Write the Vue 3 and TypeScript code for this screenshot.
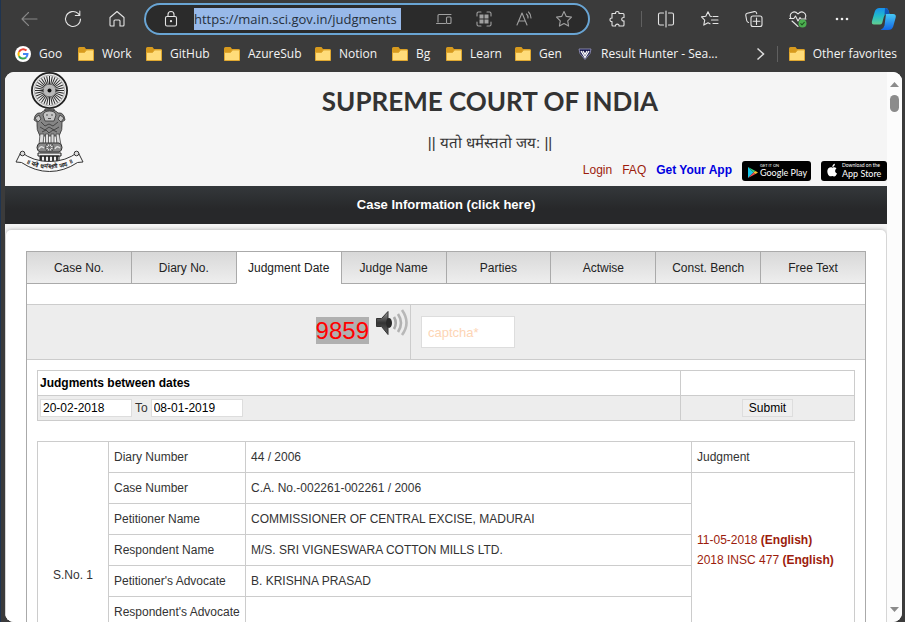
<script setup lang="ts">
import { ref } from 'vue'

const address = ref('https://main.sci.gov.in/judgments')
const captcha = ref('')
const fromDate = ref('20-02-2018')
const toDate = ref('08-01-2019')
const activeTab = ref('Judgment Date')

const tabs = ['Case No.', 'Diary No.', 'Judgment Date', 'Judge Name', 'Parties', 'Actwise', 'Const. Bench', 'Free Text']
const bookmarks = [
  { label: 'Goo', kind: 'google' },
  { label: 'Work', kind: 'folder' },
  { label: 'GitHub', kind: 'folder' },
  { label: 'AzureSub', kind: 'folder' },
  { label: 'Notion', kind: 'folder' },
  { label: 'Bg', kind: 'folder' },
  { label: 'Learn', kind: 'folder' },
  { label: 'Gen', kind: 'folder' },
  { label: 'Result Hunter - Sea...', kind: 'shield' },
]
const details = [
  { name: 'Case Number', value: 'C.A. No.-002261-002261 / 2006' },
  { name: 'Petitioner Name', value: 'COMMISSIONER OF CENTRAL EXCISE, MADURAI' },
  { name: 'Respondent Name', value: 'M/S. SRI VIGNESWARA COTTON MILLS LTD.' },
  { name: "Petitioner's Advocate", value: 'B. KRISHNA PRASAD' },
  { name: "Respondent's Advocate", value: '' },
]
const spokes = Array.from({ length: 32 }, (_, i) => (i * 360) / 32)
const pillars = [26, 30, 34, 38, 42]
</script>

<template>
  <div class="browser">
    <header class="toolbar">
      <button class="tool dim" aria-label="Back">
        <svg width="18" height="18" viewBox="0 0 18 18"><path d="M17 9H2M8.500 2.500 2 9l6.500 6.500" /></svg>
      </button>
      <button class="tool" aria-label="Refresh">
        <svg width="18" height="18" viewBox="0 0 18 18"><path d="M16.500 9A7.500 7.500 0 1 1 14 3.400l1.500 1.600M15.800 1v4.500h-4.500" /></svg>
      </button>
      <button class="tool" aria-label="Home">
        <svg width="18" height="18" viewBox="0 0 18 18"><path d="M2 7.500 9 1.500l7 6V15q0 1-1 1h-3v-5q0-1-1-1H7q-1 0-1 1v5H3q-1 0-1-1z" /></svg>
      </button>
      <div class="address">
        <svg class="lock" width="16" height="18" viewBox="0 0 16 18"><rect x="2.500" y="6.500" width="11" height="9.500" rx="1.500" /><path d="M5 6.500V4.500a3 3 0 0 1 6 0v2" /><circle cx="8" cy="11.200" r=".6" /></svg>
        <input v-model="address" class="url" aria-label="Address" />
        <div class="address-tools">
          <button aria-label="Devices"><svg width="18" height="18" viewBox="0 0 18 18"><path d="M16 4.500H4q-1 0-1 1V12M1.500 13.500h9" /><rect x="11.500" y="7" width="4.500" height="6.500" rx="1" /></svg></button>
          <button aria-label="Tiles"><svg width="18" height="18" viewBox="0 0 18 18"><path d="M2 6V3.500Q2 2 3.500 2H6M12 2h2.500Q16 2 16 3.500V6M16 12v2.500q0 1.500-1.500 1.500H12M6 16H3.500Q2 16 2 14.500V12" /><path class="solid" d="M4.500 4.500h4v4h-4zM9.500 4.500h4v4h-4zM4.500 9.500h4v4h-4zM9.500 9.500h4v4h-4z" /></svg></button>
          <button aria-label="Read aloud"><svg width="18" height="18" viewBox="0 0 18 18"><path d="m2 15 5-12 5 12M3.700 11h6.600M11.500 4a5 5 0 0 1 1.500 4M13.500 2a8 8 0 0 1 2.500 6" /></svg></button>
          <button aria-label="Favorite"><svg width="18" height="18" viewBox="0 0 18 18"><path d="m9 1.500 2.300 4.900 5.200.7-3.800 3.700.9 5.300L9 13.500l-4.600 2.600.9-5.300L1.500 7.100l5.200-.7z" /></svg></button>
        </div>
      </div>
      <button class="tool" aria-label="Extensions">
        <svg width="18" height="18" viewBox="0 0 18 18"><path d="M3 3.500h3.600c-.6-2.700 4-2.700 3.400 0h4q1 0 1 1v3c-3-.6-3 4 0 3.400V15q0 1-1 1h-4c.6-2.500-4-2.500-3.400 0H4q-1 0-1-1v-3.500c-2.700.6-2.700-4 0-3.400z" /></svg>
      </button>
      <span class="rule"></span>
      <button class="tool" aria-label="Split screen">
        <svg width="18" height="18" viewBox="0 0 18 18"><path d="M9 1v16M6.500 3H3Q1.500 3 1.500 4.500v9Q1.500 15 3 15h3.500M11.500 3H15q1.500 0 1.500 1.500v9q0 1.500-1.500 1.500h-3.500" /></svg>
      </button>
      <button class="tool" aria-label="Favorites">
        <svg width="18" height="18" viewBox="0 0 18 18"><path d="m10.500 6.500-1.300-.2L7 1.800 4.800 6.300l-4.300.6 3.200 3.200-.9 5L7 12.800l2 .9M12 6.500h5M10.500 10H17M12 13.500h5" /></svg>
      </button>
      <button class="tool" aria-label="Collections">
        <svg width="18" height="18" viewBox="0 0 18 18"><rect x="6" y="6" width="11" height="10.500" rx="2" /><path d="M11.500 8v6.500M8.200 11.200h6.600M3.500 12.500Q2 12 1.700 10.500l-.9-5q-.3-1.800 1.500-2.200l7-1.700q1.700-.3 2.200 1.300l.2.800" /></svg>
      </button>
      <button class="tool" aria-label="Browser essentials">
        <svg width="18" height="18" viewBox="0 0 18 18"><path d="M1.800 8C-.3 3.500 5-.5 9 4c4-4.500 9.300-.5 7.200 4M.5 8.500h4.300L6.500 6l2.500 5L11 7.500l1 1.500h5M3 11l6 5.500" /><circle class="ok" cx="13.500" cy="13.500" r="4" /><path class="check" d="m11.800 13.700 1.200 1.200 2.300-2.500" /></svg>
      </button>
      <button class="tool" aria-label="More">
        <svg width="18" height="18" viewBox="0 0 18 18"><g class="fill"><circle cx="4" cy="9" r="1.300" /><circle cx="9" cy="9" r="1.300" /><circle cx="14" cy="9" r="1.300" /></g></svg>
      </button>
      <button class="tool copilot" aria-label="Copilot">
        <svg width="26" height="24" viewBox="0 0 26 24">
          <defs>
            <linearGradient id="cpA" x1="0" y1="0" x2="0" y2="1"><stop offset="0" stop-color="#1690ee" /><stop offset=".5" stop-color="#23bdc8" /><stop offset="1" stop-color="#63ce8f" /></linearGradient>
            <linearGradient id="cpB" x1="0" y1="0" x2="0" y2="1"><stop offset="0" stop-color="#46c8f4" /><stop offset="1" stop-color="#1265e5" /></linearGradient>
          </defs>
          <path fill="url(#cpB)" stroke="none" d="M15 7h7q3.500 0 2.700 3.500l-2.500 9Q21 23 17 23H9.500q3-1 4-4.500z" />
          <path fill="url(#cpA)" stroke="none" d="M8.500 1H15q2 0 2.700 3l.8 3h-3q-2 0-2.700 3l-1.600 6q-.6 1.500-2.500 1.500H3Q.2 17.500 1 14L3.800 4.500Q4.900 1 8.500 1z" />
          <path fill="#1056b9" stroke="none" d="M14 1q2.800 0 3.700 3l.8 3h-3q-1.400 0-2 1z" />
        </svg>
      </button>
    </header>

    <nav class="bookmarks" aria-label="Favorites bar">
      <a v-for="b in bookmarks" :key="b.label" href="#" class="bookmark">
        <svg v-if="b.kind === 'google'" width="16" height="16" viewBox="0 0 16 16"><circle cx="8" cy="8" r="8" fill="#fff" /><g fill="none" stroke-width="2"><path stroke="#ea4335" d="M4 6a4.500 4.500 0 0 1 7.300-1.400" /><path stroke="#fbbc05" d="M4 6a4.500 4.500 0 0 0 0 4.200" /><path stroke="#34a853" d="M4 10.200a4.500 4.500 0 0 0 7 1.200" /><path stroke="#4285f4" d="M8 8h4.500a4.500 4.500 0 0 1-1.500 3.400" /></g></svg>
        <svg v-else-if="b.kind === 'folder'" width="16" height="16" viewBox="0 0 16 16"><path fill="#d79a1e" d="M0 2.500Q0 1 1.500 1h5L8 3h6.500Q16 3 16 4.500V14H0z" /><path fill="#ffdc7a" stroke="#e0a830" d="M.5 6.500h6L8.500 4h7v10.500H.5z" /></svg>
        <svg v-else width="16" height="16" viewBox="0 0 16 16"><path fill="#17174a" stroke="#9a9ac4" stroke-width=".8" d="M2 3h12l-1 4.500L8 13.500 3 7.500z" /><path fill="none" stroke="#fff" stroke-width="1.300" d="m4 5 4 6.500L12 5M6 5l2 3.500L10 5" /></svg>
        <span>{{ b.label }}</span>
      </a>
      <button class="more" aria-label="More favorites"><svg width="10" height="14" viewBox="0 0 10 14"><path d="m1.500 1.500 6 5.500-6 5.500" /></svg></button>
      <span class="rule"></span>
      <a href="#" class="bookmark">
        <svg width="16" height="16" viewBox="0 0 16 16"><path fill="#d79a1e" d="M0 2.500Q0 1 1.500 1h5L8 3h6.500Q16 3 16 4.500V14H0z" /><path fill="#ffdc7a" stroke="#e0a830" d="M.5 6.500h6L8.500 4h7v10.500H.5z" /></svg>
        <span>Other favorites</span>
      </a>
    </nav>

    <div class="viewport">
      <div class="site">
        <div class="masthead">
          <svg class="emblem" width="70" height="102" viewBox="0 0 70 102">
            <circle cx="34.500" cy="18.500" r="17.600" fill="#ececec" stroke="#222" stroke-width="1.800" />
            <circle cx="34.500" cy="18.500" r="15.300" fill="none" stroke="#888" stroke-width=".6" />
            <g stroke="#2c2c2c" stroke-width="1"><path v-for="a in spokes" :key="a" d="M34.500 13V4" :transform="`rotate(${a} 34.500 18.500)`" /></g>
            <circle cx="34.500" cy="18.500" r="6" fill="#b8b8b8" /><circle cx="34.500" cy="18.500" r="2" fill="#111" />
            <path fill="#999" stroke="#444" d="M30 37h9l1 5H29z" />
            <path fill="#858585" stroke="#333" stroke-width=".8" d="M20 44q2-4 6-3 2-3 8.500-3t8.500 3q4-1 6 3l1 4-3 2q1 8-3 14H25q-4-6-3-14l-3-2z" />
            <path fill="#c5c5c5" stroke="#333" stroke-width=".8" d="M28 43q1-4 6.500-4t6.500 4l-2 6h-9zM20 46l4-3 2 4-3 3zM49 46l-4-3-2 4 3 3z" />
            <path fill="none" stroke="#333" stroke-width=".8" d="M31 43h2M36 43h2M33 46.500h3M26 50l4 4 4-2 4 2 5-4M25 55l5 3 4-3 5 3 5-3M27 60l4-2 3 3 4-3 4 2" />
            <path fill="#ddd" stroke="#444" stroke-width=".8" d="M25 62h4l-1 11h-4zM30.500 62h3v11h-3zM36 62h3v11h-3zM41 62h3l2 11h-4z" />
            <path fill="#888" stroke="#333" d="M25 71h19q3 1 3 4.500T44 80H25q-3-1-3-4.500t3-4.500z" />
            <circle cx="34.500" cy="75.500" r="4" fill="#ddd" stroke="#222" stroke-width=".8" /><path stroke="#555" stroke-width=".7" d="M31 75.500h7M34.500 72v7M32 73l5 5M37 73l-5 5" />
            <path stroke="#ddd" stroke-width="1.500" fill="none" d="M24 77q2-4 5-1M40 77q2-4 5-1" />
            <path fill="#eee" stroke="#222" d="M23 81h23v3H23zM25 84h19v7H25z" />
            <path v-for="x in pillars" :key="x" :d="`M${x} 84v7`" stroke="#222" stroke-width="1.800" />
            <path fill="#f8f8f8" stroke="#333" d="M6 80 1 90l5.500.5Q20 99.500 34.500 99.500T62.500 90.500L68 90 63 80Q51 89.500 34.500 89.500T6 80z" />
            <circle cx="7.500" cy="81.500" r="2.300" fill="#ddd" stroke="#333" /><circle cx="61.500" cy="81.500" r="2.300" fill="#ddd" stroke="#333" />
            <path id="motto" fill="none" d="M4 86.500Q18 96.500 34.500 96.500T65 86.500" />
            <text class="motto"><textPath href="#motto" startOffset="50%" text-anchor="middle">॥ यतो धर्मस्ततो जय: ॥</textPath></text>
          </svg>
          <div class="titles">
            <h1>SUPREME COURT OF INDIA</h1>
            <p>|| यतो धर्मस्ततो जय: ||</p>
            <div class="quick">
              <a href="#">Login</a>
              <a href="#">FAQ</a>
              <a href="#" class="app">Get Your App</a>
              <a href="#" class="store" aria-label="Google Play">
                <svg width="69" height="20" viewBox="0 0 69 20"><rect width="69" height="20" rx="3" fill="#000" /><path fill="#15c5e8" d="M6 6v11l5.500-5.500z" /><path fill="#35d07f" d="m6 6 7.500 4-2 1.500z" /><path fill="#ef4a4e" d="m6 17 7.500-4-2-1.500z" /><path fill="#fbc02d" d="m13.500 10 2.500 1.500-2.500 1.500-2-1.500z" /><text x="18" y="6" font-size="4">GET IT ON</text><text x="18" y="15" font-size="9">Google Play</text></svg>
              </a>
              <a href="#" class="store" aria-label="App Store">
                <svg width="66" height="20" viewBox="0 0 66 20"><rect width="66" height="20" rx="3" fill="#000" /><path fill="#fff" d="M11.500 6.800c1.500-.8 3-.5 4 .7-2 1.300-1.700 4.200.5 5-1 2.500-2.200 3.400-3.700 2.700q-1-.4-2 0C8 16.200 6 12.500 6.400 9.500 7 6.500 9.500 5.800 11.500 6.800zM11.300 6c0-1.700 1.200-3 2.600-3.200.1 1.700-1.100 3.100-2.600 3.200z" /><text x="21" y="6" font-size="5">Download on the</text><text x="21" y="16" font-size="9">App Store</text></svg>
              </a>
            </div>
          </div>
        </div>
        <a href="#" class="banner">Case Information (click here)</a>

        <main class="card">
          <div class="tabs" role="tablist">
            <button v-for="t in tabs" :key="t" role="tab" :aria-selected="t === activeTab" :class="{ active: t === activeTab }" @click="activeTab = t">{{ t }}</button>
          </div>
          <form class="panel" @submit.prevent>
            <div class="captcha">
              <div class="code">
                <span>9859</span>
                <button type="button" aria-label="Play captcha">
                  <svg width="34" height="30" viewBox="0 0 34 30">
                    <defs><linearGradient id="spk" x1="0" y1="0" x2="0" y2="1"><stop offset="0" stop-color="#999" /><stop offset=".5" stop-color="#333" /><stop offset="1" stop-color="#666" /></linearGradient></defs>
                    <path fill="url(#spk)" stroke="#333" d="M1.500 10.500h5L13 3.500v23L6.500 18.500h-5z" /><ellipse cx="14" cy="15" rx="3" ry="5" fill="#292929" />
                    <g fill="none" stroke-width="2.600"><path stroke="#aaa" d="M19 9q3.500 6 0 12" /><path stroke="#b2b2b2" d="M23 6q6 9 0 18" /><path stroke="#b8b8b8" d="M27 2q9 13 0 25" /></g>
                  </svg>
                </button>
              </div>
              <div class="entry"><input v-model="captcha" placeholder="captcha*" aria-label="captcha" /></div>
            </div>

            <table class="search">
              <colgroup><col class="dates" /><col /></colgroup>
              <tbody>
                <tr><th>Judgments between dates</th><td></td></tr>
                <tr class="shade">
                  <td><div class="range"><input id="from" v-model="fromDate" aria-label="Judgments between dates" /><label for="to">To</label><input id="to" v-model="toDate" /></div></td>
                  <td><div class="send"><button type="submit">Submit</button></div></td>
                </tr>
              </tbody>
            </table>

            <table class="results">
              <colgroup><col class="serial" /><col class="name" /><col /><col class="links" /></colgroup>
              <tbody>
                <tr><td rowspan="7" class="center">S.No. 1</td><td>Diary Number</td><td>44 / 2006</td><td>Judgment</td></tr>
                <tr v-for="(d, i) in details" :key="d.name">
                  <td>{{ d.name }}</td><td>{{ d.value }}</td>
                  <td v-if="i === 0" rowspan="5" class="judgment">
                    <a href="#">11-05-2018 <b>(English)</b></a><a href="#">2018 INSC 477 <b>(English)</b></a>
                  </td>
                </tr>
                <tr class="rest"><td></td><td></td><td></td></tr>
              </tbody>
            </table>
          </form>
        </main>
      </div>
      <div class="scrollbar" aria-hidden="true">
        <svg width="9" height="5" viewBox="0 0 9 5"><path d="M0 5 4.500 0 9 5z" /></svg>
        <span class="thumb"></span>
        <svg class="down" width="9" height="5" viewBox="0 0 9 5"><path d="m0 0 4.500 5L9 0z" /></svg>
      </div>
    </div>
  </div>
</template>

<style>
body { overflow: hidden; background: #3b3b3b; }
</style>

<style scoped>
* { box-sizing: border-box; }
a { text-decoration: none; }
button { border: 0; padding: 0; background: none; font: inherit; cursor: pointer; }
svg { display: block; flex: none; }

.browser {
  height: 100vh;
  display: flex;
  flex-direction: column;
  border-left: 1px solid #1f3450;
  background: #3b3b3b;
  color: #fff;
  font: 12px/16px "Open Sans", "Noto Sans", sans-serif;
}
.toolbar { flex: none; display: flex; align-items: center; height: 38px; padding: 0 1px 0 6px; }
.tool { flex: none; width: 44px; height: 34px; display: flex; align-items: center; justify-content: center; }
.tool svg, .address svg { fill: none; stroke: #e4e4e4; stroke-width: 1.1; stroke-linecap: round; stroke-linejoin: round; }
.tool.dim svg { stroke: #888; }
.tool .fill { fill: #eee; stroke: none; }
.tool .ok { fill: #4caf50; stroke: none; }
.tool .check { stroke: #1f5522; }
.copilot { width: 40px; }
.rule { flex: none; width: 1px; height: 16px; margin: 0 2px 0 1px; background: #606060; }
.address {
  flex: 1;
  min-width: 0;
  height: 32px;
  margin: 0 6px 0 5px;
  display: flex;
  align-items: center;
  border: 2px solid #69a5d4;
  border-radius: 16px;
  background: #2b2b2b;
}
.lock { margin: 0 15px 0 17px; }
.url { width: 207px; height: 22px; border: 0; padding: 0; background: #98b9e9; color: #26303c; font: 13px/22px "Open Sans", "Noto Sans", sans-serif; }
.address-tools { margin-left: auto; padding-right: 4px; display: flex; }
.address-tools button { width: 40px; display: flex; justify-content: center; }
.address-tools svg { stroke: #a0a0a0; }
.address-tools .solid { fill: #a0a0a0; stroke: none; }

.bookmarks { flex: none; height: 34px; padding: 0 8px 2px 6px; display: grid; grid-template-columns: 63px 68px 78px 91px 77px 54px 69px 62px 1fr 30px 5px auto; align-items: center; }
.bookmark { display: flex; align-items: center; gap: 8px; padding-left: 8px; color: #f4f4f4; white-space: nowrap; }
.more { display: flex; justify-content: center; }
.more svg { fill: none; stroke: #ddd; stroke-width: 1.5; }

.viewport { flex: 1; min-height: 0; display: flex; margin: 0 3px 0 4px; border-radius: 9px; overflow: hidden; background: #fcfcfc; }
.site { flex: 1; min-width: 0; overflow: hidden; background: #f5f5f5; color: #333; font: 12px/20px "Liberation Sans", Arial, sans-serif; }
.masthead { display: flex; gap: 8px; height: 114px; padding-left: 10px; }
.titles { flex: 1; display: flex; flex-direction: column; padding-top: 11px; text-align: center; }
h1 { margin: 0; font: 700 26px/36px Lato, sans-serif; color: #333; }
.titles p { margin: 12px 0 6px; font-size: 15px; line-height: 24px; }
.quick { display: flex; justify-content: flex-end; gap: 10px; line-height: 18px; }
.quick a, .judgment a { color: #9c1c0c; }
.quick .app { color: #0000e0; font-weight: 700; }
.store text { fill: #fff; font-family: Lato, sans-serif; }
.motto { fill: #222; font-size: 6px; font-weight: 700; }
.banner { display: block; height: 38px; background: linear-gradient(#34383b, #27282a 60%); color: #fff; font-weight: 700; font-size: 13px; line-height: 37px; text-align: center; }

.card { margin: 6px 1px 0; padding: 21px 20px; border-radius: 5px 5px 0 0; background: #fff; box-shadow: 0 0 4px #aaa; }
.tabs { display: grid; grid-template-columns: repeat(8, 1fr); border-right: 1px solid #aaa; }
.tabs button { height: 33px; padding-top: 1px; border: solid #aaa; border-width: 1px 0 1px 1px; background: linear-gradient(#d8d8d8, #eee); color: #222; line-height: 30px; }
.tabs .active { background: #fff; border-bottom-color: #fff; }
.panel { border: solid #aaa; border-width: 0 1px; padding-top: 20px; }
.captcha { display: grid; grid-template-columns: 384px 1fr; height: 56px; border: solid #ccc; border-width: 1px 0; background: #ededed; }
.code { display: flex; justify-content: flex-end; align-items: flex-start; gap: 6px; padding: 3px 1px; border-right: 1px solid #ccc; }
.code span { margin-top: 9px; background: #b0b0b0; color: #f00; font-size: 24px; line-height: 27px; }
.entry { display: flex; align-items: center; padding-left: 10px; }
.entry input { width: 94px; height: 32px; padding: 1px 6px 0; border: 1px solid #ddd; background: #fff; font: 13px "Liberation Sans", Arial, sans-serif; }
.entry input::placeholder { color: #fdd5b5; opacity: 1; }

table { width: calc(100% - 20px); margin: 10px 10px 0; border-collapse: collapse; table-layout: fixed; }
th, td { border: 1px solid #ccc; text-align: left; }
.search th, .search td { height: 25px; padding: 0 2px; }
.search th { color: #000; }
.dates { width: 643px; }
.shade { background: #ededed; }
.range { display: flex; align-items: center; gap: 3px; }
.range input { width: 92px; height: 18px; padding: 0 2px; border: 1px solid #ddd; background: #fff; color: #000; font: 12px "Liberation Sans", Arial, sans-serif; }
.send { display: flex; justify-content: center; }
.send button { height: 18px; padding: 0 6px; border: 1px solid #ddd; background: #efefef; color: #000; line-height: 16px; }
.results { margin-top: 20px; }
.results td { height: 31px; padding: 0 5px; }
.results .center { text-align: center; }
.serial { width: 71px; }
.name { width: 137px; }
.links { width: 163px; }
.judgment a { display: block; }
.results .rest td { height: 80px; }

.scrollbar { flex: none; width: 15px; display: flex; flex-direction: column; align-items: center; padding: 10px 0; background: #fcfcfc; }
.scrollbar svg { fill: #8b8b8b; }
.thumb { width: 9px; height: 17px; margin-top: 8px; border-radius: 5px; background: #8b8b8b; }
.down { margin-top: auto; }
</style>
